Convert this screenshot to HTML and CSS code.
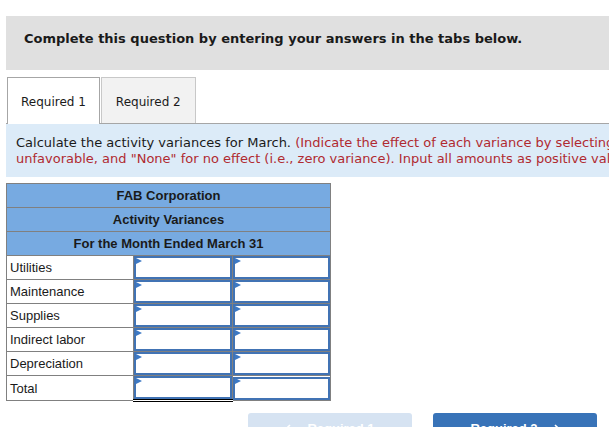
FILE: index.html
```html
<!DOCTYPE html>
<html lang="en">
<head>
    <meta charset="UTF-8">
    <title>Activity Variances</title>
    <link rel="stylesheet" href="styles.css">
</head>
<body>
    <div class="page">
        <div class="notice">Complete this question by entering your answers in the tabs below.</div>

        <div class="tabs">
            <div class="tab active">Required 1</div>
            <div class="tab">Required 2</div>
        </div>

        <div class="prompt">
            Calculate the activity variances for March. <span class="hint">(Indicate the effect of each variance by selecting "F" for favorable, "U" for</span><br>
            <span class="hint">unfavorable, and "None" for no effect (i.e., zero variance). Input all amounts as positive values.)</span>
        </div>

        <table class="sheet">
            <colgroup>
                <col class="col-label">
                <col class="col-input">
                <col class="col-input">
            </colgroup>
            <tr><th colspan="3">FAB Corporation</th></tr>
            <tr><th colspan="3">Activity Variances</th></tr>
            <tr><th colspan="3">For the Month Ended March 31</th></tr>
            <tr>
                <td class="label">Utilities</td>
                <td class="cell"><input type="text"></td>
                <td class="cell"><input type="text"></td>
            </tr>
            <tr>
                <td class="label">Maintenance</td>
                <td class="cell"><input type="text"></td>
                <td class="cell"><input type="text"></td>
            </tr>
            <tr>
                <td class="label">Supplies</td>
                <td class="cell"><input type="text"></td>
                <td class="cell"><input type="text"></td>
            </tr>
            <tr>
                <td class="label">Indirect labor</td>
                <td class="cell"><input type="text"></td>
                <td class="cell"><input type="text"></td>
            </tr>
            <tr>
                <td class="label">Depreciation</td>
                <td class="cell"><input type="text"></td>
                <td class="cell"><input type="text"></td>
            </tr>
            <tr class="total">
                <td class="label">Total</td>
                <td class="cell sum"><input type="text"></td>
                <td class="cell"><input type="text"></td>
            </tr>
        </table>

        <div class="nav">
            <button class="nav-btn prev">
                <svg width="6" height="10" viewBox="0 0 6 10"><path d="M5 1 L1 5 L5 9" fill="none" stroke="#fff" stroke-width="1.6"/></svg>
                Required 1
            </button>
            <button class="nav-btn next">
                Required 2
                <svg width="6" height="10" viewBox="0 0 6 10"><path d="M1 1 L5 5 L1 9" fill="none" stroke="#fff" stroke-width="1.6"/></svg>
            </button>
        </div>
    </div>
</body>
</html>
```

FILE: styles.css
```css
html, body { overflow: hidden; }
body { margin: 0; background: #fff; color: #1a1a1a; font-family: "DejaVu Sans", Verdana, sans-serif; }
.page { margin: 16px 0 0 6px; width: 680px; }

.notice { background: #e0e0e0; font-size: 13px; font-weight: bold; line-height: 16px; padding: 15px 18px 23px; }

.tabs { display: flex; align-items: flex-start; gap: 1px; margin-top: 7px; padding-left: 1px; border-bottom: 1px solid #a6a6a6; }
.tab { font-size: 12px; line-height: 14px; padding: 17px 14px 14px; background: #f2f2f2; border: 1px solid #c8c8c8; border-bottom: none; }
.tab.active { background: #fff; border-color: #a6a6a6; padding: 17px 13px 15px; margin-bottom: -1px; }

.prompt { background: #dcebf8; font-size: 13px; line-height: 16px; padding: 11px 10px 10px; white-space: nowrap; }
.hint { color: #b02a30; }

.sheet { margin-top: 6px; width: 325px; table-layout: fixed; border-collapse: collapse; font-family: "Liberation Sans", Arial, sans-serif; font-size: 13px; color: #1a1a1a; }
.col-label { width: 127px; }
.col-input { width: 98px; }
.sheet th { height: 23px; padding: 0; background: #77aae1; border: 1px solid #808080; font-weight: bold; }
.sheet td { height: 23px; padding: 0; border: 1px solid #808080; }
.sheet .label { padding: 0 3px; white-space: nowrap; }
.sheet .cell { position: relative; }
.sheet .cell::before { content: ""; position: absolute; left: 2px; top: 2px; border-left: 6px solid #3d79c4; border-top: 3px solid transparent; border-bottom: 3px solid transparent; }
.sheet input { display: block; width: 100%; height: 23px; box-sizing: border-box; margin: 0; border: 2px solid #4173b4; background: #fff; }
.sheet .sum { border-top: 1px solid #000; border-bottom: 3px double #000; }

.nav { display: flex; gap: 21px; margin: 11px 0 0 242px; }
.nav-btn { width: 164px; height: 36px; border: none; border-radius: 3px; display: flex; justify-content: center; align-items: flex-start; gap: 16px; padding: 8px 0 0; font-family: "Liberation Sans", Arial, sans-serif; font-size: 13px; font-weight: bold; line-height: 15px; color: #fff; }
.nav-btn svg { margin-top: 3px; }
.prev { background: #d6e3f2; }
.next { background: #3873b8; }
```
